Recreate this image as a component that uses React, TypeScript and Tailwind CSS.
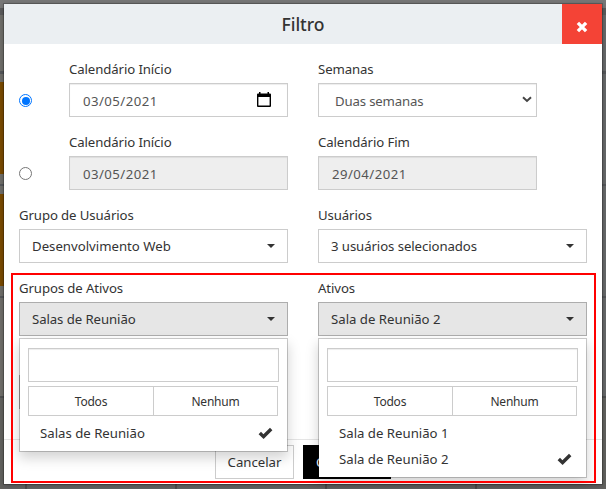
import React from 'react';

type MenuProps = { items: { label: string; checked?: boolean }[] };

function Check() {
  return (
    <svg width="15" height="13" viewBox="0 0 15 13" className="shrink-0">
      <path d="M0.6 7.2L3 4.8L5.4 7.2L12 0.8L14.4 3.2L5.6 12.1Z" fill="#333" />
    </svg>
  );
}

function CloseIcon() {
  return (
    <svg width="12" height="12" viewBox="0 0 12 12" className="mt-[6px]">
      <path d="M1.9 1.9L10.1 10.1M10.1 1.9L1.9 10.1" stroke="#fff" strokeWidth="3.4" />
    </svg>
  );
}

function CalendarIcon() {
  return (
    <svg width="14" height="15" viewBox="0 0 14 15" className="mr-1 mb-[3px]">
      <path d="M2 0h1.5v1.5h7V0H12v1.5h1a1 1 0 0 1 1 1V14a1 1 0 0 1-1 1H1a1 1 0 0 1-1-1V2.5a1 1 0 0 1 1-1h1zM1.4 5v8.6h11.2V5z" fill="#000" fillRule="evenodd" />
    </svg>
  );
}

function Chevron() {
  return (
    <svg width="10" height="7" viewBox="0 0 10 7" className="mr-1 mb-[3px]">
      <path d="M1 1.3L5 5L9 1.3" fill="none" stroke="#444" strokeWidth="2" />
    </svg>
  );
}

function Caret() {
  return <span className="h-0 w-0 border-x-4 border-t-4 border-x-transparent border-t-[#333]" />;
}

function Radio({ on }: { on?: boolean }) {
  return (
    <div className={`flex h-[13px] w-[13px] items-center justify-center rounded-full border ${on ? 'border-[#0075ff]' : 'border-[#767676]'}`}>
      {on && <div className="h-[8px] w-[8px] rounded-full bg-[#0075ff]" />}
    </div>
  );
}

function Label({ children }: { children: React.ReactNode }) {
  return <div className="h-6 leading-[20px] tracking-[-0.1px] whitespace-nowrap">{children}</div>;
}

function Field({ children, className = '' }: { children?: React.ReactNode; className?: string }) {
  return (
    <div className={`flex h-[34px] items-center justify-between border border-[#ccc] pt-0.5 whitespace-nowrap text-[#555] shadow-[inset_0_1px_1px_rgba(0,0,0,0.075)] ${className}`}>
      {children}
    </div>
  );
}

function DateText({ children }: { children: React.ReactNode }) {
  return <span className="pt-0.5 pl-px tracking-[0.45px]">{children}</span>;
}

function Picker({ text, open, tracking = '' }: { text: string; open?: boolean; tracking?: string }) {
  return (
    <div className={`flex h-[34px] w-[269px] items-center justify-between border px-3 whitespace-nowrap ${open ? 'border-[#adadad] bg-[#e6e6e6]' : 'border-[#ccc] bg-white'}`}>
      <span className={`pt-0.5 ${tracking}`}>{text}</span>
      <Caret />
    </div>
  );
}

function Menu({ items }: MenuProps) {
  return (
    <div className="absolute top-[36px] left-0 z-10 w-[269px] border border-black/20 bg-white bg-clip-padding px-2 pt-[9px] pb-[5px] shadow-[0_6px_12px_rgba(0,0,0,0.175)]">
      <Field className="bg-white" />
      <div className="mt-1 mr-px flex h-[30px] border border-[#ccc] text-[12px]">
        <div className="flex w-[125px] items-center justify-center border-r border-[#ccc] pt-0.5 tracking-[-0.2px]">Todos</div>
        <div className="flex flex-1 items-center justify-center pt-0.5 tracking-[-0.2px]">Nenhum</div>
      </div>
      <div className="mt-1">
        {items.map((it) => (
          <div key={it.label} className="flex h-[26px] items-center justify-between pr-[6px] pl-3">
            <span className="pt-0.5">{it.label}</span>
            {it.checked && <Check />}
          </div>
        ))}
      </div>
    </div>
  );
}

function Side({ left }: { left?: boolean }) {
  const tile = left ? 'h-[92px] bg-[#7a4a00]' : 'h-[92px]';
  return (
    <div className={`flex w-1 flex-col ${left ? 'bg-[#6f6e6a]' : 'bg-[#67696a]'}`}>
      <div className="h-2 bg-[#777]" />
      <div className="h-[7px] bg-[#5b5b5c]" />
      <div className="h-14" />
      <div className="h-[3px] bg-[#55575a]" />
      <div className="h-2" />
      <div className={tile} />
      <div className="h-[10px]" />
      <div className="h-[2px] bg-[#55575a]" />
      <div className="h-[8px]" />
      <div className={tile} />
      <div className="h-[10px]" />
      <div className="h-[2px] bg-[#55575a]" />
      <div className="h-[98px]" />
      <div className="h-[2px] bg-[#4f5051]" />
      <div className="flex-1 bg-[#62625f]" />
    </div>
  );
}

export default function App() {
  return (
    <div className="relative flex h-[489px] w-[606px] flex-col overflow-hidden bg-[#626262] font-['Noto_Sans','Segoe_UI',sans-serif] text-[13.2px] text-[#333]">
      <div className="absolute inset-0 flex justify-between">
        <Side left />
        <Side />
      </div>
      <div className="absolute inset-x-1 top-0 h-1 bg-[#777]" />
      <div className="absolute inset-x-0 bottom-0 flex h-[5px] gap-[148px] pl-[25px]">
        <div className="w-[2px] bg-[#4d4d4d]" />
        <div className="w-[2px] bg-[#4d4d4d]" />
        <div className="w-[2px] bg-[#4d4d4d]" />
        <div className="w-[2px] bg-[#4d4d4d]" />
      </div>
      <div className="relative mt-1 ml-1 flex h-[480px] w-[598px] flex-col bg-white shadow-[0_0_0_1px_rgba(0,0,0,0.2),0_1px_5px_rgba(0,0,0,0.3)]">
        <div className="flex h-10 items-center bg-[#ebeff2]">
          <div className="flex-1 pl-10 text-center text-[17.5px] font-medium">Filtro</div>
          <div className="flex h-10 w-10 items-center justify-center bg-[#f44336]"><CloseIcon /></div>
        </div>
        <div className="flex h-[395px] flex-col gap-[15px] px-[15px] pt-[15px]">
          <div className="flex h-[58px]">
            <div className="w-[50px] pt-[35px]"><Radio on /></div>
            <div className="w-[249px]">
              <Label>Calendário Início</Label>
              <Field className="w-[219px] px-3"><DateText>03/05/2021</DateText><CalendarIcon /></Field>
            </div>
            <div>
              <Label>Semanas</Label>
              <Field className="w-[219px] pr-0 pl-4"><span className="pt-0.5 tracking-[-0.15px]">Duas semanas</span><Chevron /></Field>
            </div>
          </div>
          <div className="flex h-[58px]">
            <div className="w-[50px] pt-[35px]"><Radio /></div>
            <div className="w-[249px]">
              <Label>Calendário Início</Label>
              <Field className="w-[219px] bg-[#eee] px-3"><DateText>03/05/2021</DateText></Field>
            </div>
            <div>
              <Label>Calendário Fim</Label>
              <Field className="w-[219px] bg-[#eee] px-3"><DateText>29/04/2021</DateText></Field>
            </div>
          </div>
          <div className="flex gap-[30px]">
            <div><Label>Grupo de Usuários</Label><Picker text="Desenvolvimento Web" /></div>
            <div><Label>Usuários</Label><Picker text="3 usuários selecionados" tracking="tracking-[-0.08px]" /></div>
          </div>
          <div className="flex gap-[30px]">
            <div>
              <Label>Grupos de Ativos</Label>
              <div className="relative">
                <Picker open text="Salas de Reunião" tracking="tracking-[-0.08px]" />
                <Menu items={[{ label: 'Salas de Reunião', checked: true }]} />
              </div>
            </div>
            <div>
              <Label>Ativos</Label>
              <div className="relative">
                <Picker open text="Sala de Reunião 2" />
                <Menu items={[{ label: 'Sala de Reunião 1' }, { label: 'Sala de Reunião 2', checked: true }]} />
              </div>
            </div>
          </div>
          <div className="mt-6 h-[34px] w-[240px] shrink-0 border border-[#aaa]" />
        </div>
        <div className="flex flex-1 gap-[9px] border-t border-[#e5e5e5] pt-[5px] pl-[211px]">
          <div className="flex h-[34px] w-[79px] items-center justify-center border border-[#ccc] pt-0.5">Cancelar</div>
          <div className="flex h-[34px] w-[88px] items-center bg-black pt-0.5 pl-[13px] text-white">C</div>
        </div>
      </div>
      <div className="absolute top-[273px] left-[11px] z-20 h-[210px] w-[585px] border-2 border-[#f00]" />
    </div>
  );
}
